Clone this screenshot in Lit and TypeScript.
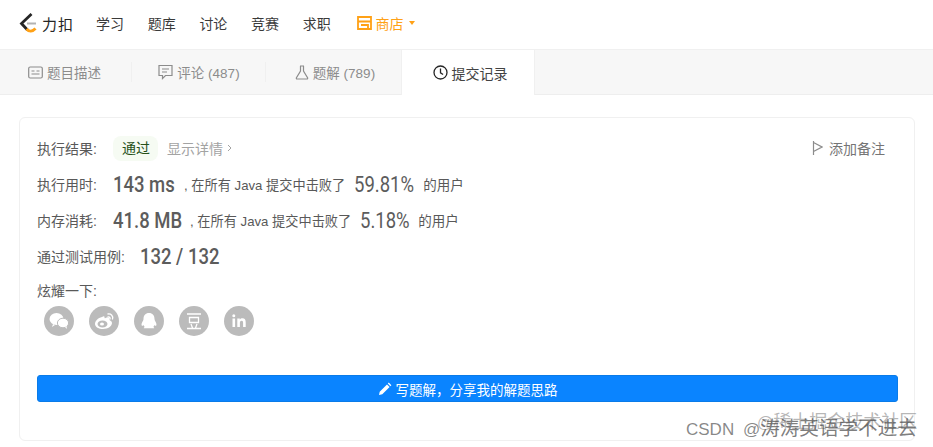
import {LitElement, html, css, svg} from 'lit';
import {customElement} from 'lit/decorators.js';

const navItems = ['学习', '题库', '讨论', '竞赛', '求职'];
const writeLabel = '写题解\uFF0C分享我的解题思路';

const shareIcons = [
  // wechat
  svg`<ellipse cx="12.500" cy="13" rx="7" ry="6" fill="#fff"/><path d="M9 18l-1 3 3-2z" fill="#fff"/><ellipse cx="19" cy="17" rx="5.600" ry="4.800" fill="#fff" stroke="#bbb"/><path d="M21 21l2 2-.5-3z" fill="#fff"/>`,
  // weibo
  svg`<path d="M13 11c-4 1-7 4-7 7 0 3 4 5 8 5 5 0 9-3 9-6 0-2-2-2.500-2.500-3 .5-2-1-3-4-2-1 .5-1 0-1-1 0-1-1-1-2.500 0z" fill="#fff"/><ellipse cx="13.500" cy="18" rx="5" ry="3.500" fill="#bbb"/><ellipse cx="13" cy="18" rx="2" ry="1.600" fill="#fff"/><path d="M19 8c3-.5 5.500 2 4.500 5M19 11c1.500-.3 2.500 .8 2 2" fill="none" stroke="#fff" stroke-width="1.300" stroke-linecap="round"/>`,
  // qq
  svg`<path d="M15 7c-3.500 0-5.500 2.500-5.500 6 0 1-.5 2-1.300 3.200-.9 1.800-.9 3.600 0 3.600.4 0 .9-.4 1.300-.9.3.9.8 1.700 1.300 2.100-.9.4-1.300.9-.9 1.300h10.200c.4-.4 0-.9-.9-1.300.5-.4 1-1.200 1.300-2.100.4.5.9.9 1.300.9.9 0 .9-1.800 0-3.600-.8-1.200-1.300-2.200-1.300-3.200 0-3.500-2-6-5.500-6z" fill="#fff"/>`,
  // douban
  svg`<path d="M8 8h14M10.500 11.500h9v5h-9zM8 22.500h14M12 18l1.500 4M18 18l-1.500 4" fill="none" stroke="#fff" stroke-width="1.300"/>`,
  // linkedin
  svg`<path d="M8.500 12.500h2.600V21H8.500zM8.300 9.800a1.500 1.500 0 1 1 3 0 1.500 1.500 0 0 1-3 0zM13.300 12.500h2.500v1.200c.6-.9 1.500-1.400 2.700-1.400 2.300 0 3.200 1.500 3.200 3.900V21h-2.600v-4.300c0-1.200-.4-2-1.400-2-1.100 0-1.800.8-1.800 2V21h-2.600z" fill="#fff"/>`,
];

@customElement('app-root')
export class AppRoot extends LitElement {
  static styles = css`
    :host {
      display: block;
      position: relative;
      width: 933px;
      height: 447px;
      overflow: hidden;
      background: #fff;
      font-family: "Liberation Sans", "Noto Sans CJK SC", sans-serif;
      color: #595959;
      font-size: 14px;
    }

    .nav {
      display: flex;
      align-items: center;
      height: 46px;
      padding: 0 0 3px 19px;
      border-bottom: 1px solid #f0f0f0;
    }
    .logo {
      display: flex;
      align-items: center;
      gap: 5px;
      width: 77px;
      color: #262626;
      font-size: 15px;
      letter-spacing: 1px;
    }
    .nav-item {
      width: 51.700px;
      font-size: 14px;
      color: #3a3a3a;
    }
    .shop {
      display: flex;
      align-items: center;
      gap: 3px;
      margin-left: 3px;
      color: #ffa116;
      font-size: 14px;
    }
    .caret {
      width: 0;
      height: 0;
      margin-left: 3px;
      border: 3.500px solid transparent;
      border-top: 4px solid #ffa116;
      border-bottom: 0;
    }

    .tabs {
      display: flex;
      height: 44px;
      background: #f7f7f7;
      border-bottom: 1px solid #eee;
    }
    .tab {
      display: flex;
      align-items: center;
      justify-content: center;
      gap: 4px;
      box-sizing: border-box;
      color: #8c8c8c;
      font-size: 13.500px;
      position: relative;
    }
    .tab + .tab::before {
      content: '';
      position: absolute;
      left: -1px;
      top: 12px;
      bottom: 12px;
      width: 1px;
      background: #f0f0f0;
    }
    .t1 {
      width: 132px;
      padding-right: 3px;
    }
    .t2 {
      width: 134px;
    }
    .t3 {
      width: 135px;
      padding-left: 3px;
    }
    .tab.active {
      width: 134px;
      height: 45px;
      padding-left: 4px;
      background: #fff;
      color: #424242;
      font-size: 14px;
      border-left: 1px solid #f0f0f0;
      border-right: 1px solid #f0f0f0;
    }
    .tab.active::before {
      display: none;
    }

    .card {
      display: flex;
      flex-direction: column;
      width: 896px;
      height: 324px;
      box-sizing: border-box;
      margin: 22px 0 0 19px;
      padding: 0 16px 0 17px;
      border: 1px solid #f0f0f0;
      border-radius: 6px;
    }
    .row {
      display: flex;
      align-items: center;
      height: 36px;
      white-space: nowrap;
    }
    .row.first {
      margin-top: 12px;
    }
    .label {
      width: 76px;
      color: #595959;
    }
    .badge {
      height: 25px;
      line-height: 25px;
      padding: 0 8px 0 9px;
      background: #f6fbf3;
      border-radius: 8px;
      color: #26501a;
    }
    .detail {
      display: flex;
      align-items: center;
      gap: 4px;
      margin-left: 9px;
      color: #a3a3a3;
    }
    .note {
      display: flex;
      align-items: center;
      gap: 6px;
      margin-left: auto;
      margin-right: 13px;
      color: #757575;
    }
    .num {
      display: block;
      font-family: Roboto, sans-serif;
      font-size: 22px;
      font-weight: 500;
      color: #5c5c5c;
    }
    .num.pct {
      font-weight: 400;
      margin: 0 10px 0 9px;
    }
    .num span {
      display: inline-block;
      transform: scaleX(0.84);
      transform-origin: left center;
    }
    .w62 {
      width: 62px;
    }
    .w68 {
      width: 68px;
    }
    .w77 {
      width: 77px;
    }
    .w59 {
      width: 59px;
    }
    .w48 {
      width: 48px;
    }
    .small {
      font-size: 13.500px;
    }
    .small.sep {
      margin-left: 9px;
      font-size: 13.200px;
    }
    .tall {
      width: 103px;
    }
    .share-label {
      height: 32px;
    }
    .share {
      display: flex;
      gap: 15px;
      margin-left: 7px;
    }
    .circle {
      width: 30px;
      height: 30px;
      border-radius: 50%;
      background: #bbb;
    }
    .circle svg {
      display: block;
    }
    .write {
      display: flex;
      align-items: center;
      justify-content: center;
      gap: 4px;
      height: 27px;
      margin-top: 39px;
      box-sizing: border-box;
      background: #0a84ff;
      border: 1px solid #0a7be8;
      border-radius: 3px;
      color: #fff;
      font-size: 13.500px;
    }

    .mark {
      position: absolute;
      white-space: nowrap;
    }
    .mark.csdn {
      left: 686px;
      top: 412px;
      font-size: 17px;
      word-spacing: 4px;
      color: rgba(90, 90, 90, 0.72);
    }
    .mark.csdn span {
      font-size: 19.600px;
      color: rgba(70, 70, 70, 0.7);
    }
    .mark.juejin {
      left: 757px;
      top: 407px;
      font-size: 16px;
      color: rgba(120, 120, 120, 0.55);
    }
    .mark.juejin span {
      font-size: 18px;
    }
  `;

  render() {
    return html`
      <div class="nav">
        <div class="logo">
          <svg width="18" height="20" viewBox="0 0 18 20">
            <path d="M12.500 1L2.500 10.500l6 6.500" fill="none" stroke="#262626" stroke-width="2.800"/>
            <path d="M7.500 16c2.500 2.800 6 2.800 9 -.5" fill="none" stroke="#ffa116" stroke-width="2.800"/>
            <path d="M8 10.500h9" stroke="#b3b3b3" stroke-width="2"/>
          </svg>
          <span>力扣</span>
        </div>
        ${navItems.map((n) => html`<div class="nav-item">${n}</div>`)}
        <div class="shop">
          <svg width="15" height="14" viewBox="0 0 15 14">
            <path d="M1 1h13v12H1zM1 5.500h13M4 9h7v4" fill="none" stroke="#ffa116" stroke-width="1.800"/>
          </svg>
          <span>商店</span>
          <i class="caret"></i>
        </div>
      </div>

      <div class="tabs">
        <div class="tab t1">
          <svg width="15" height="13" viewBox="0 0 15 13">
            <rect x=".7" y="1" width="13.600" height="11" rx="1.500" fill="none" stroke="#8c8c8c" stroke-width="1.200"/>
            <path d="M3.500 5h3M3.500 8h8M8.500 5h3" stroke="#8c8c8c" stroke-width="1.200"/>
          </svg>
          <span>题目描述</span>
        </div>
        <div class="tab t2">
          <svg width="15" height="16" viewBox="0 0 15 16">
            <path d="M1 1.500h13v10H7.500L4.500 14.500v-3H1zM4 5h7M4 8h5" fill="none" stroke="#8c8c8c" stroke-width="1.200"/>
          </svg>
          <span>评论 (487)</span>
        </div>
        <div class="tab t3">
          <svg width="14" height="15" viewBox="0 0 14 15">
            <path d="M5 1h4M5.500 1v5L1.300 13a.8.8 0 0 0 .7 1h10a.8.8 0 0 0 .7-1L8.500 6V1" fill="none" stroke="#8c8c8c" stroke-width="1.200"/>
          </svg>
          <span>题解 (789)</span>
        </div>
        <div class="tab active">
          <svg width="15" height="15" viewBox="0 0 15 15">
            <circle cx="7.500" cy="7.500" r="6.500" fill="none" stroke="#262626" stroke-width="1.300"/>
            <path d="M7.500 3.500v4.300l2.600 1.700" fill="none" stroke="#262626" stroke-width="1.300"/>
          </svg>
          <span>提交记录</span>
        </div>
      </div>

      <div class="card">
        <div class="row first">
          <span class="label">执行结果:</span>
          <span class="badge">通过</span>
          <span class="detail">显示详情
            <svg width="5" height="8" viewBox="0 0 5 8"><path d="M1 1l3 3-3 3" fill="none" stroke="#a3a3a3"/></svg>
          </span>
          <span class="note">
            <svg width="11" height="14" viewBox="0 0 11 14"><path d="M1.500 0v14M1.500 1.500l8.500 4.500-8.500 4.500" fill="none" stroke="#8c8c8c" stroke-width="1.200"/></svg>
            添加备注
          </span>
        </div>
        <div class="row">
          <span class="label">执行用时:</span>
          <span class="num w62"><span>143 ms</span></span>
          <span class="small sep">, 在所有 Java 提交中击败了</span>
          <span class="num pct w59"><span>59.81%</span></span>
          <span class="small">的用户</span>
        </div>
        <div class="row">
          <span class="label">内存消耗:</span>
          <span class="num w68"><span>41.8 MB</span></span>
          <span class="small sep">, 在所有 Java 提交中击败了</span>
          <span class="num pct w48"><span>5.18%</span></span>
          <span class="small">的用户</span>
        </div>
        <div class="row">
          <span class="label tall">通过测试用例:</span>
          <span class="num w77"><span>132 / 132</span></span>
        </div>
        <div class="row share-label">炫耀一下:</div>
        <div class="share">
          ${shareIcons.map((i) => html`<div class="circle"><svg width="30" height="30" viewBox="0 0 30 30">${i}</svg></div>`)}
        </div>
        <div class="write">
          <svg width="14" height="14" viewBox="0 0 14 14"><path d="M1 13l.7-3.300 7.300-7.300 2.600 2.600-7.300 7.300zM9.800 1.600l1-1 2.600 2.600-1 1z" fill="#fff"/></svg>
          <span>${writeLabel}</span>
        </div>
      </div>

      <div class="mark juejin">@<span>稀土掘金技术社区</span></div>
      <div class="mark csdn">CSDN @<span>涛涛英语学不进去</span></div>
    `;
  }
}
